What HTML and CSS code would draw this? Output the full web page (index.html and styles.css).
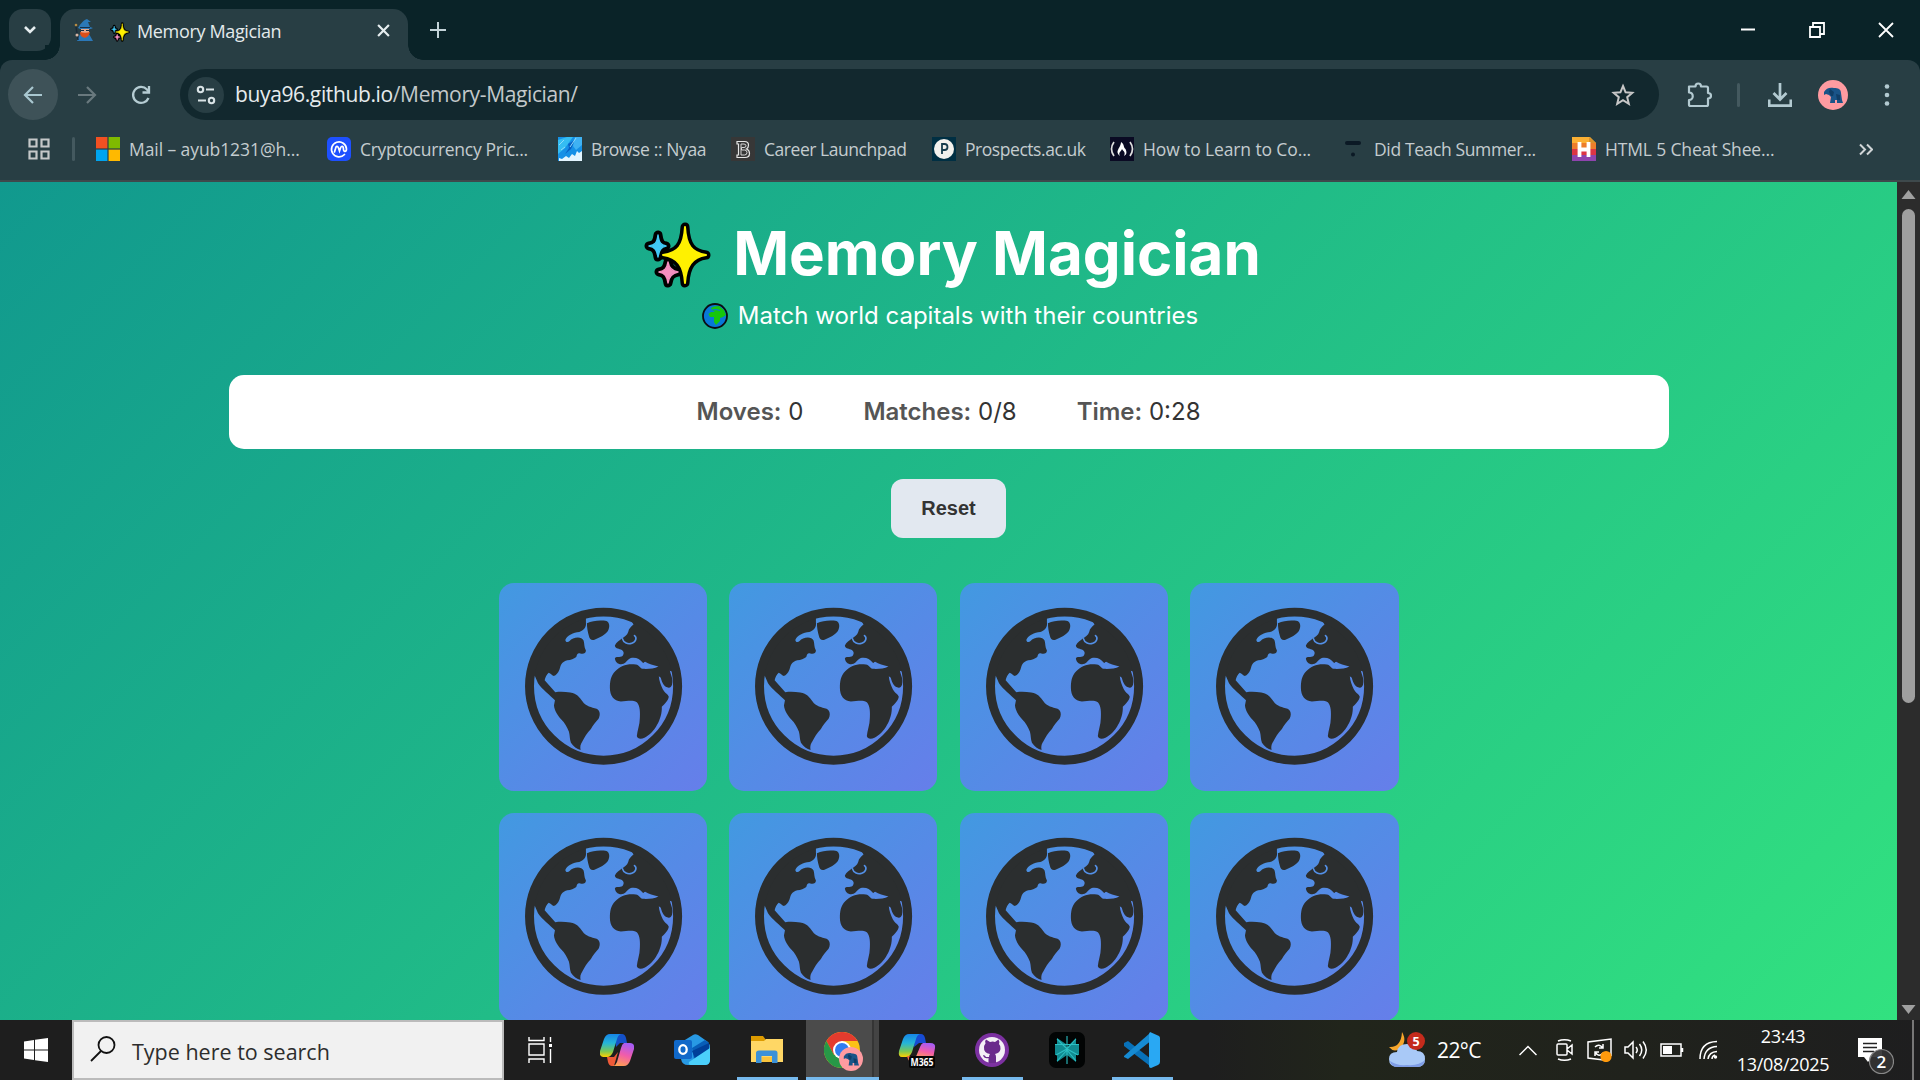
FILE: index.html
```html
<!DOCTYPE html>
<html lang="en">
<head>
<meta charset="utf-8">
<title>Memory Magician</title>
<link rel="stylesheet" href="styles.css">
</head>
<body>
<svg class="defs" aria-hidden="true">
  <symbol id="sparkles" viewBox="0 0 67 66">
    <g stroke="#000" stroke-width="9" stroke-linejoin="round">
      <path d="M41 5C42 24 48 31 62 33C48 35 42 44 41 61C40 44 34 35 19 33C34 31 40 24 41 5Z"/>
      <path d="M14 13C15 21 17 23 22 24C17 25 15 28 14 35C13 28 11 25 5 24C11 23 13 21 14 13Z"/>
      <path d="M24 40C25 46 28 49 34 50C28 51 25 54 24 61C23 54 21 51 15 50C21 49 23 46 24 40Z"/>
    </g>
    <path fill="#fff100" stroke="#fff100" stroke-width="2" stroke-linejoin="round" d="M41 5C42 24 48 31 62 33C48 35 42 44 41 61C40 44 34 35 19 33C34 31 40 24 41 5Z"/>
    <path fill="#41c8f5" stroke="#41c8f5" stroke-width="1.500" stroke-linejoin="round" d="M14 13C15 21 17 23 22 24C17 25 15 28 14 35C13 28 11 25 5 24C11 23 13 21 14 13Z"/>
    <path fill="#f48fc0" stroke="#f48fc0" stroke-width="1.500" stroke-linejoin="round" d="M24 40C25 46 28 49 34 50C28 51 25 54 24 61C23 54 21 51 15 50C21 49 23 46 24 40Z"/>
  </symbol>
  <symbol id="globe" viewBox="27 39 625 625">
    <g fill="#2b2e2f">
      <path d="M288 137V158C290 172 281 182 268 186C250 188 232 196 226 210C228 218 234 218 239 213C247 203 274 197 281 212C284 222 282 232 288 242C288 252 279 253 271 251C264 248 261 253 259 261C251 267 243 270 232 271C218 275 213 283 211 291C208 303 203 314 193 318C187 319 183 311 176 309C170 314 166 322 164 331L196 367C212 365 226 366 241 368C261 371 269 383 278 395C288 410 305 412 320 417C331 423 332 435 326 447C317 458 309 466 303 478C290 491 284 503 278 514C271 524 270 532 272 541C261 538 250 530 243 519C239 508 240 497 237 486C231 472 224 458 214 449C203 437 193 421 192 406L195 391C179 375 156 358 144 340L134 317L118 330L115 300C140 210 210 150 288 137Z"/>
      <path d="M291 160C308 152 330 150 350 153C360 158 360 172 354 183C347 194 330 203 312 210C304 212 299 207 297 198C293 186 291 172 291 160Z"/>
      <path d="M424 152L431 164C424 170 417 176 415 186C412 196 404 200 396 206C389 212 379 217 375 227C376 236 384 236 393 239C402 243 404 251 398 258C391 264 377 257 375 266C377 280 389 286 401 282C409 278 411 270 421 265C436 261 450 266 459 279C463 281 462 276 466 276C476 283 491 286 506 290C492 298 474 297 458 297C449 294 449 286 438 284C414 280 392 287 376 304C362 318 360 336 360 354C360 378 372 394 393 395C410 395 427 389 441 397C451 407 451 430 450 445C450 466 442 483 441 499C443 509 455 508 464 504C493 491 518 447 516 411C524 404 535 393 537 381C535 372 525 370 519 358C513 346 508 332 507 319L513 324C517 340 523 352 537 354C548 351 549 339 547 325L540 303L549 306L562 352L570 300C551 230 500 175 424 152Z"/>
    </g>
    <path fill="none" stroke="#5390e7" stroke-width="5" stroke-linecap="round" d="M398 207C401 219 414 224 426 220C440 215 441 202 434 197"/>
    <circle cx="419" cy="203" r="9" fill="#2b2e2f"/>
    <circle cx="341" cy="349" r="222.5" fill="none" stroke="#2b2e2f" stroke-width="27"/>
  </symbol>
  <symbol id="elephant" viewBox="0 0 30 30">
    <circle cx="15" cy="15" r="15" fill="#ff9ba1"/>
    <path fill="#1a5488" d="M6 12C8 8 12 7 16 8C20 8 23 9 23 13L24 20L25 23H19V20H17V23H12L13 17L11 15L8 14L6 15Z"/>
    <path fill="#103e68" d="M12 9L16 12L15 16L13 16L11 12ZM18 14L22 15L22 20H19Z"/>
  </symbol>
</svg>

<div class="screen">
  <header class="tabstrip">
    <button class="tab-search"><svg width="14" height="10" viewBox="0 0 14 10"><path d="M2 2L7 7L12 2" fill="none" stroke="#e6eef0" stroke-width="2.6"/></svg></button>
    <div class="tab">
      <svg class="wizard" viewBox="0 0 20 22"><path fill="#2b78b8" d="M4 9C6 6 8 2 13 0L17 3L14 3L16 8L19 9C15 11 8 11 4 9ZM3 22L6 15L10 18L15 15L19 22Z"/><path fill="#e9a88c" d="M7 10H15V14H7Z"/><path fill="#dc4f1b" d="M6 13C9 14 13 14 16 13C15 17 13 18 11 19C8 18 6 17 6 13Z"/><path fill="#172f48" d="M7 11H10V12H7ZM12 11H15V12H12ZM6 8H16V9H6Z"/><path stroke="#1a2a38" stroke-width="1.5" d="M2 8L4 21"/><circle cx="2" cy="6" r="1.3" fill="#b68b43"/><circle cx="3" cy="16" r="1.5" fill="#d8b7a5"/></svg>
      <svg class="tab-spark"><use href="#sparkles"/></svg>
      <span class="tab-title">Memory Magician</span>
      <svg class="tab-close" viewBox="0 0 12 12"><path d="M1 1L11 11M11 1L1 11" stroke="#e6eef0" stroke-width="2"/></svg>
    </div>
    <svg class="plus" viewBox="0 0 16 16"><path d="M8 0V16M0 8H16" stroke="#c3d3d8" stroke-width="2"/></svg>
    <div class="window-controls">
      <svg viewBox="0 0 16 16"><path d="M1 7.5H15" stroke="#fff" stroke-width="2"/></svg>
      <svg viewBox="0 0 16 16"><path d="M1 5H11V15H1ZM4 5V1H15V12H11" fill="none" stroke="#fff" stroke-width="1.8"/></svg>
      <svg viewBox="0 0 16 16"><path d="M1 1L15 15M15 1L1 15" stroke="#fff" stroke-width="1.8"/></svg>
    </div>
  </header>

  <nav class="toolbar">
    <span class="nav-btn active"><svg width="20" height="20" viewBox="0 0 20 20"><path d="M10 2L2 10L10 18M2 10H19" fill="none" stroke="#a9c7d0" stroke-width="2.2"/></svg></span>
    <span class="nav-btn"><svg width="20" height="20" viewBox="0 0 20 20"><path d="M10 2L18 10L10 18M18 10H1" fill="none" stroke="#69797e" stroke-width="2.2"/></svg></span>
    <span class="nav-btn"><svg width="22" height="22" viewBox="0 0 22 22"><path d="M18.500 14A8 8 0 1 1 17 5.500L19 8" fill="none" stroke="#b5ccd3" stroke-width="2.3"/><path d="M19 2V8.500H12.500" fill="none" stroke="#b5ccd3" stroke-width="2.3"/></svg></span>
    <div class="omnibox">
      <span class="site-info"><svg width="20" height="20" viewBox="0 0 20 20" fill="none" stroke="#d9e3e6" stroke-width="2.1"><circle cx="4.500" cy="4.500" r="2.700"/><path d="M10 4.500H18M2 15.500H10"/><circle cx="15.500" cy="15.500" r="2.700"/></svg></span>
      <span class="url"><b>buya96.github.io</b>/Memory-Magician/</span>
      <svg class="star" viewBox="0 0 24 24"><path d="M12 3L14.600 9.300L21.300 9.800L16.200 14.200L17.800 20.800L12 17.200L6.200 20.800L7.800 14.200L2.700 9.800L9.400 9.300Z" fill="none" stroke="#c7c7c7" stroke-width="2"/></svg>
    </div>
    <svg class="puzzle" viewBox="0 0 26 26"><path d="M3 4.500H9.500C9.500 .5 15 .5 15 4.500H20.500Q22 4.500 22 6V11C26 11 26 16.500 22 16.500V22.500Q22 24 20.500 24H4.500Q3 24 3 22.500V18C8 18 8 10.500 3 10.500Z" fill="none" stroke="#b3cad1" stroke-width="2.2" stroke-linejoin="round"/></svg>
    <i class="sep tool-sep"></i>
    <svg class="download" viewBox="0 0 24 24"><path d="M12 0V16M5.500 10L12 16.500L18.500 10M1.200 16.500V22.700H22.800V16.500" fill="none" stroke="#b3cad1" stroke-width="2.7"/></svg>
    <svg class="avatar"><use href="#elephant"/></svg>
    <svg class="dots" viewBox="0 0 6 24"><g fill="#b3cad1"><circle cx="3" cy="3.500" r="2.300"/><circle cx="3" cy="12" r="2.300"/><circle cx="3" cy="20.500" r="2.300"/></g></svg>
  </nav>

  <nav class="bookmarks">
    <svg class="apps" viewBox="0 0 22 22"><g fill="none" stroke="#c5c8c9" stroke-width="2.200"><path d="M1.500 1.500H8.500V8.500H1.500ZM13.500 1.500H20.500V8.500H13.500ZM1.500 13.500H8.500V20.500H1.500ZM13.500 13.500H20.500V20.500H13.500Z"/></g></svg>
    <i class="sep mark-sep"></i>
    <a class="mark m1"><svg viewBox="0 0 24 24"><path fill="#f25022" d="M0 0H11.400V11.400H0Z"/><path fill="#7fba00" d="M12.600 0H24V11.400H12.600Z"/><path fill="#00a4ef" d="M0 12.600H11.400V24H0Z"/><path fill="#ffb900" d="M12.600 12.600H24V24H12.600Z"/></svg><span>Mail – ayub1231@h...</span></a>
    <a class="mark m2"><svg viewBox="0 0 24 24"><rect width="24" height="24" rx="5" fill="#1e50ff"/><path d="M17.500 17.500A7.500 7.500 0 1 1 19.500 12C19.500 15 16.500 15 16.500 12.500C16.500 8.500 14.500 8.500 13.500 11L12.500 14L11.500 11C10.500 8.500 9 9 8.500 11.500L7.500 15" fill="none" stroke="#fff" stroke-width="1.700" stroke-linecap="round"/></svg><span>Cryptocurrency Pric...</span></a>
    <a class="mark m3"><svg viewBox="0 0 24 24"><path fill="#1590e6" d="M0 0H24V24H0Z"/><path fill="#35bdf2" d="M0 3L9 0H15L7 11L0 17Z"/><path fill="#0860c4" d="M10 7L17 3L13 12L7 17L11 11Z"/><path fill="#3fb2f3" d="M17 0H24V8L18 13L15 9Z"/><path fill="#e3f5ff" d="M24 14L21 16L19 14L17 19L14 17L11 21L8 19L4 22L1 21V24H24Z"/><path stroke="#8ddcfa" d="M18 1L12 10M3 13L7 10M1 8L6 3" fill="none"/></svg><span>Browse :: Nyaa</span></a>
    <a class="mark m4"><svg viewBox="0 0 24 24"><path fill="#373737" d="M0 0H24V24H0Z"/><path d="M6 4.500H13.500Q17.500 4.500 17.500 8Q17.500 11 15.500 12Q18.500 13 18.500 16.500Q18.500 20.500 14 20.500H6V18H7.500V7H6Z" fill="none" stroke="#e5e5e5" stroke-width="1.200"/><path d="M10 7V18H13.500Q16 18 16 15.500T13.500 13H10.500V10.500H13Q15 10.500 15 8.800T13 7Z" fill="none" stroke="#d5d5d5"/></svg><span>Career Launchpad</span></a>
    <a class="mark m5"><svg viewBox="0 0 24 24"><path fill="#002f43" d="M0 0H24V24H0Z"/><circle cx="12" cy="12" r="10" fill="#f3f1ed"/><path d="M10 17V7H12.500Q15.500 7 15.500 10T12.500 13H10" fill="none" stroke="#173c4d" stroke-width="1.800"/></svg><span>Prospects.ac.uk</span></a>
    <a class="mark m6"><svg viewBox="0 0 24 24"><path fill="#0a0a23" d="M0 0H24V24H0Z"/><path d="M4 5Q-1 12 4 19M20 5Q25 12 20 19" fill="none" stroke="#ddd" stroke-width="1.700"/><path d="M11 5C15 8 13 10 15.500 12C17.500 16 16 18 14 19C16 15 13 14 12 12C11 15 8 15 10 19C4 14 11 11 11 5Z" fill="#fff"/></svg><span>How to Learn to Co...</span></a>
    <a class="mark m7"><svg viewBox="0 0 24 24"><rect x="4" y="4" width="16" height="4" rx="2" fill="#0b1925"/><circle cx="12" cy="17.500" r="2" fill="#0b1925"/></svg><span>Did Teach Summer...</span></a>
    <a class="mark m8"><svg viewBox="0 0 24 24"><path fill="#fbb034" d="M0 0H18L24 6V8H0Z"/><path fill="#ed7d2b" d="M0 6H24V12H0Z"/><path fill="#dc3545" d="M0 12H24V18H0Z"/><path fill="#8e44ad" d="M0 18H24V24H0Z"/><path fill="#d8912c" d="M17 0V6H24Z"/><path d="M7.500 5V20M16.500 5V20M7.500 12.500H16.500" stroke="#fff" stroke-width="3.800"/></svg><span>HTML 5 Cheat Shee...</span></a>
    <svg class="more" viewBox="0 0 14 12"><path d="M1 1L6 6L1 11M8 1L13 6L8 11" fill="none" stroke="#d0d5d7" stroke-width="2"/></svg>
  </nav>

  <div class="viewport">
    <main class="game">
      <h1><svg class="title-spark"><use href="#sparkles"/></svg><span>Memory Magician</span></h1>
      <p class="subtitle"><svg class="earth" viewBox="0 0 26 26"><circle cx="13" cy="13" r="12" fill="#0878d7" stroke="#0b0d12" stroke-width="1.800"/><path fill="#16c60c" d="M9 5L12 3.500L17 3L22 7L24 12L21 14L18 15L18 18L14 22L12 19V14L8 14L6.500 11L9 9L13 9L10 7Z"/><path stroke="#0878d7" stroke-width="1.200" fill="none" d="M10 7L14 6.500L18 7.500"/></svg><span>Match world capitals with their countries</span></p>
      <section class="stats">
        <div><b>Moves:</b> 0</div><div><b>Matches:</b> 0/8</div><div><b>Time:</b> 0:28</div>
      </section>
      <button class="reset">Reset</button>
      <section class="board">
        <div class="card"><svg><use href="#globe"/></svg></div><div class="card"><svg><use href="#globe"/></svg></div><div class="card"><svg><use href="#globe"/></svg></div><div class="card"><svg><use href="#globe"/></svg></div>
        <div class="card"><svg><use href="#globe"/></svg></div><div class="card"><svg><use href="#globe"/></svg></div><div class="card"><svg><use href="#globe"/></svg></div><div class="card"><svg><use href="#globe"/></svg></div>
      </section>
    </main>
    <aside class="scrollbar">
      <svg viewBox="0 0 14 9"><path fill="#a0a0a0" d="M7 0L14 9H0Z"/></svg>
      <i class="thumb"></i>
      <svg viewBox="0 0 14 9"><path fill="#a0a0a0" d="M0 0H14L7 9Z"/></svg>
    </aside>
  </div>

  <footer class="taskbar">
    <span class="start"><svg width="24" height="24" viewBox="0 0 24 24"><path fill="#fff" d="M0 3.400L10 2V11.400H0ZM11 1.800L24 0V11.400H11ZM0 12.500H10V22L0 20.600ZM11 12.500H24V24L11 22.200Z"/></svg></span>
    <div class="search"><svg width="26" height="26" viewBox="0 0 26 26"><circle cx="16.500" cy="9" r="8" fill="none" stroke="#111" stroke-width="1.800"/><path d="M11 15L1 25" stroke="#111" stroke-width="1.800"/></svg><span>Type here to search</span></div>
    <span class="task view"><svg width="24" height="27" viewBox="0 0 24 27" fill="none" stroke="#fff" stroke-width="1.400"><path d="M1 0V3.500H16V0M1 7H16V18H1ZM1 26V22H16V26M22.500 0V5M22.500 12V26"/><path d="M22.500 7V10" stroke-width="3"/></svg></span>
    <span class="task"><svg width="34" height="32" viewBox="0 0 34 32"><defs><linearGradient id="cpA" x1="0" y1="0" x2="0" y2="1"><stop offset="0" stop-color="#1685e8"/><stop offset=".4" stop-color="#25b5d8"/><stop offset=".75" stop-color="#7ac755"/><stop offset="1" stop-color="#ffd000"/></linearGradient><linearGradient id="cpB" x1=".6" y1="0" x2=".3" y2="1"><stop offset="0" stop-color="#a65cf5"/><stop offset=".5" stop-color="#f15caa"/><stop offset="1" stop-color="#ffa052"/></linearGradient></defs><path fill="#1450c8" d="M15 0H22Q25 0 26 4L27 9H20L16 13Z"/><path fill="#ef5a38" d="M7 23H14L18 18L14 32H12Q9 32 8 28Z"/><path fill="url(#cpA)" d="M10 0H21Q18 1 17 5L13 18Q11 23 7 23H3Q-1 23 0 17L4 5Q6 0 10 0Z"/><path fill="url(#cpB)" d="M24 9H30Q35 9 34 15L30 27Q28 32 24 32H13Q16 31 17 28L21 14Q22 10 24 9Z"/></svg></span>
    <span class="task"><svg width="36" height="32" viewBox="0 0 36 32"><path fill="#2899e4" d="M6 9L19 1Q21-.500 24 1L34 8Q36 10 36 14V26Q36 30 31 31H14Q8 31 7 25Z"/><path fill="#085eb8" d="M18 14L31 6L35 9V16L20 25Z"/><path fill="#003f99" d="M18 17L35 9V15L21 24Z"/><path fill="#4bcffa" d="M15 28L36 14V26Q36 31 31 31H17Q14 31 15 28Z"/><rect y="6" width="18" height="19" rx="2" fill="#1068c9"/><ellipse cx="9" cy="15.500" rx="3.700" ry="4.400" fill="none" stroke="#fff" stroke-width="2.300"/></svg></span>
    <span class="task open"><svg width="34" height="28" viewBox="0 0 34 28"><path fill="#dd9b00" d="M1 0H13L16 4V8H1Z"/><path fill="#ffd765" d="M1 5L14 5L16 3H33V26H1Z"/><path fill="#3b91d8" d="M6 27V17Q6 14.500 9 14.500H25Q27.500 14.500 27.500 17V27H22V20H11.500V27Z"/><path fill="#f9c33c" d="M12 21H22V26H12Z"/></svg></span>
    <span class="task open current"><svg width="40" height="40" viewBox="0 0 40 40"><circle cx="18" cy="18" r="18" fill="#fbc117"/><path fill="#e33b2e" d="M2.400 9A18 18 0 0 1 33.600 9H18L10 23Z"/><path fill="#279847" d="M2.400 9A18 18 0 0 0 18 36L26 23H10Z"/><circle cx="18" cy="18" r="9" fill="#fff"/><circle cx="18" cy="18" r="7" fill="#307df0"/><svg x="15" y="15" width="24" height="24"><use href="#elephant"/></svg></svg></span>
    <span class="task"><svg class="copilot-365" width="37" height="36" viewBox="0 0 37 36"><path fill="#174bd3" d="M16 2H22Q25 2 26 6L27 11H20L15 15Z"/><path fill="url(#cpA)" d="M10 2H21Q18 3 17 7L13 20Q11 25 7 25H3Q-1 25 0 19L4 7Q6 2 10 2Z"/><path fill="#ed663f" d="M8 24H15L12 30Q9 29 8 24Z"/><path fill="url(#cpB)" d="M24 11H31Q37 11 36 16L34 27H16L21 15Q22 12 24 11Z"/><rect x="10" y="24" width="26" height="12" rx="2" fill="#050505"/><text class="m365" x="11.500" y="33.500" textLength="23" lengthAdjust="spacingAndGlyphs">M365</text></svg></span>
    <span class="task open"><svg width="34" height="34" viewBox="0 0 34 34"><circle cx="17" cy="17" r="17" fill="#7c31a1"/><circle cx="17" cy="17" r="13" fill="#f4f0f6"/><path fill="#6a2b8c" d="M13.500 30V25Q9 26 8 22Q10 22 11 24H14Q14 22 15 21Q8.500 20 9 14Q9 12 10.500 10.500Q9.500 8 11 6.500L15 9Q18 8 20 9L23.500 6.500Q25 9 24 11Q26 13 25.500 16Q25 20 20 21Q21 22 21 24V30Z"/></svg></span>
    <span class="task"><svg width="36" height="36" viewBox="0 0 36 36"><rect width="36" height="36" rx="7" fill="#020404"/><path fill="#118b91" d="M8 6L17 12V16L27 6V12H30V23H27V30L18 23L8 30V23H6V12H8Z"/><path d="M18 4V32M8 7L18 17L27 7M6 12.500H30M8 29L18 18L27 29M7 23L18 17L29 23" fill="none" stroke="#2cbfc3" stroke-width="1.100"/></svg></span>
    <span class="task open"><svg width="36" height="36" viewBox="0 0 36 36"><path fill="#0871b9" d="M0 11L4 9L27 27V35L26 34L0 14Z"/><path fill="#168bd3" d="M0 24L26 1L28 8L4 27L0 25Z"/><path fill="#29a8f3" d="M26 0L35 4Q36 5 36 6V30Q36 32 34 33L27 36Q25 36 25 34V2Z"/></svg></span>
    <div class="weather"><svg width="37" height="36" viewBox="0 0 37 36"><path fill="#f6a62b" d="M13 0Q19 10 10 17Q5 21 0 15Q12 16 13 0Z"/><path fill="#a9c9f7" d="M9 35Q0 35 0 27Q0 20 8 20Q9 12 18 12Q26 12 28 19Q36 19 36 27Q36 35 28 35Z"/><path fill="#7f9de6" d="M1 29Q8 34 18 33Q30 34 36 28Q35 35 28 35H9Q2 35 1 29Z"/><circle cx="27" cy="9" r="9" fill="#c42b1c"/><text class="badge5" x="23.500" y="13.500">5</text></svg><span>22°C</span></div>
    <div class="tray">
      <svg class="chevron" width="18" height="11" viewBox="0 0 18 11"><path d="M.500 10L9 1.500L17.500 10"/></svg>
      <svg class="meet" width="17" height="22" viewBox="0 0 17 22"><path d="M2 2Q8.500-.500 15 2M2 20Q8.500 22.500 15 20M2 5H10Q11 5 11 6V15Q11 16 10 16H2Q1 16 1 15V6Q1 5 2 5ZM11 10L16 6V15L11 11"/></svg>
      <svg class="update" width="26" height="24" viewBox="0 0 26 24"><path d="M17 22L1 20V4L24 1V18M8 9Q12 5 16 10M16 6V10H12M8 18V14H12M8 14Q12 20 16 15"/><circle cx="19" cy="18.500" r="5.600" fill="#ff9a0c" stroke="none"/></svg>
      <svg class="volume" width="24" height="20" viewBox="0 0 24 20"><path d="M1 7H4L9 2V18L4 13H1ZM12 7Q14.500 10 12 13M15.500 4Q20 10 15.500 16M19 1.500Q25.500 10 19 18.500"/></svg>
      <svg class="battery" width="24" height="14" viewBox="0 0 24 14"><path d="M1 1H21V13H1ZM22.500 5V9"/><path fill="#fff" stroke="none" d="M3 3H12V11H3Z"/></svg>
      <svg width="19" height="20" viewBox="0 0 19 20"><path d="M1 19Q1 2 18 1.500M5 19Q6 7 18 6.500M9 19Q10 12 18 11.500"/><path d="M13 19Q13 16 16 15"/><circle cx="16.500" cy="17" r="1.700" fill="#fff" stroke="none"/></svg>
    </div>
    <div class="clock"><span>23:43</span><span>13/08/2025</span></div>
    <svg class="notice" viewBox="0 0 36 38"><path fill="#fff" d="M0 0H24V19H14L10 24L6 19H0Z"/><path stroke="#222" stroke-width="1.500" d="M5 5.500H19M5 9.500H19M5 13.500H16"/><circle cx="23.500" cy="23.500" r="12" fill="#333" fill-opacity=".93" stroke="#888" stroke-width="1.200"/><text class="badge2" x="18.500" y="29.500">2</text></svg>
    <i class="desktop-edge"></i>
  </footer>
</div>
</body>
</html>
```
FILE: styles.css
```css
* { box-sizing: border-box; }
body { margin: 0; overflow: hidden; font-family: "Open Sans", "Noto Sans", sans-serif; }
svg { display: block; flex: none; }
.defs { position: absolute; width: 0; height: 0; }
.screen { width: 1920px; height: 1080px; display: flex; flex-direction: column; background: #0a2328; }

.tabstrip { height: 60px; flex: none; display: flex; align-items: flex-start; padding-top: 9px; }
.tab-search { width: 42px; height: 42px; margin-left: 9px; padding: 0; border: 0; border-radius: 14px; background: #283e44; display: grid; place-items: center; }
.tab { position: relative; width: 348px; height: 51px; margin-left: 9px; padding: 0 18px 9px 14px; border-radius: 15px 15px 0 0; background: #283e44; display: flex; align-items: center; }
.tab::before, .tab::after { content: ""; position: absolute; bottom: 0; width: 15px; height: 15px; }
.tab::before { left: -15px; background: radial-gradient(circle at 0 0, #0a2328 14.5px, #283e44 15px); }
.tab::after { right: -15px; background: radial-gradient(circle at 100% 0, #0a2328 14.5px, #283e44 15px); }
.wizard { width: 20px; height: 22px; }
.tab-spark { width: 20px; height: 20px; margin: 3px 7px 0 16px; }
.tab-title { flex: 1; color: #e3eaec; font-size: 18px; letter-spacing: -.35px; white-space: nowrap; padding: 1px 0 0; }
.tab-close { width: 13px; height: 13px; }
.plus { width: 16px; height: 16px; margin: 13px 0 0 22px; }
.window-controls { display: flex; gap: 53px; margin: 13px 26px 0 auto; }
.window-controls svg { width: 16px; height: 16px; }

.toolbar { height: 60px; flex: none; display: flex; align-items: center; padding: 9px 0 0 8px; background: #283e44; border-radius: 12px 12px 0 0; }
.nav-btn { width: 50px; height: 51px; margin-right: 4px; display: grid; place-items: center; border-radius: 50%; }
.nav-btn.active { background: #3e5258; }
.omnibox { width: 1479px; height: 51px; margin-left: 10px; padding: 0 24px 0 8px; border-radius: 26px; background: #12282e; display: flex; align-items: center; }
.site-info { width: 36px; height: 36px; border-radius: 50%; background: #283e44; display: grid; place-items: center; }
.url { flex: 1; margin: -1px 0 0 11px; color: #c3c8ca; font-size: 21px; letter-spacing: -.37px; }
.url b { color: #e6ebed; font-weight: 400; }
.star { width: 24px; height: 24px; }
.puzzle { width: 26px; height: 26px; margin-left: 27px; }
.sep { width: 3px; height: 24px; border-radius: 2px; background: #44595f; }
.tool-sep { margin-left: 25px; }
.download { width: 24px; height: 24px; margin-left: 28px; }
.avatar { width: 30px; height: 30px; margin-left: 26px; }
.dots { width: 6px; height: 24px; margin-left: 36px; }

.bookmarks { height: 62px; flex: none; display: flex; align-items: center; padding: 0 0 2px 28px; background: #283e44; border-bottom: 2px solid #3e494c; }
.apps { width: 22px; height: 22px; }
.mark-sep { margin: 0 21px 0 22px; }
.mark { display: flex; align-items: center; gap: 9px; color: #c4cccf; font-size: 17.5px; letter-spacing: -.3px; white-space: nowrap; }
.mark svg { width: 24px; height: 24px; }
.m1, .m2 { width: 231px; }
.m1 { letter-spacing: -.08px; }
.m3 { width: 173px; letter-spacing: -.37px; }
.m4 { width: 201px; letter-spacing: -.45px; }
.m5 { width: 178px; letter-spacing: -.45px; }
.m6, .m7 { width: 231px; }
.m6 { letter-spacing: -.12px; }
.m7 { letter-spacing: -.37px; }
.m8 { width: 287px; letter-spacing: -.15px; }
.more { width: 14px; height: 13px; }

.viewport { height: 838px; flex: none; display: flex; }
.game { width: 1897px; overflow: hidden; padding-top: 35px; display: flex; flex-direction: column; align-items: center; font-family: Inter, sans-serif; background: linear-gradient(135deg, #11998e 0%, #38ef7d 100%) 0 0 / 1897px 1350px; }
h1 { display: flex; align-items: center; gap: 22px; height: 72px; margin: 0; padding-left: 8px; color: #fff; font-size: 60px; font-weight: 700; line-height: 72px; white-space: nowrap; }
.title-spark { width: 67px; height: 66px; margin-top: 4px; }
.subtitle { display: flex; align-items: center; gap: 10px; height: 29px; margin: 12px 0 0; padding-left: 3px; color: #fff; font-size: 24px; line-height: 29px; white-space: nowrap; }
.earth { width: 26px; height: 26px; }
.stats { width: 1440px; height: 74px; flex: none; margin-top: 45px; padding-bottom: 2px; border-radius: 15px; background: #fff; display: flex; justify-content: center; align-items: center; gap: 60px; color: #333; font-size: 24px; }
.stats b { color: #555; font-weight: 600; }
.reset { width: 115px; height: 59px; flex: none; margin-top: 30px; border: 0; border-radius: 12px; background: #e2e8f0; color: #333; font: 700 20px "Liberation Sans", sans-serif; }
.board { width: 900px; flex: none; margin-top: 45px; display: grid; grid-template-columns: repeat(4, 1fr); column-gap: 22.5px; row-gap: 22px; }
.card { height: 208px; border-radius: 15px; background: linear-gradient(135deg, #4299e1, #667eea); }
.card svg { width: 100%; height: 100%; }
.scrollbar { width: 23px; padding: 8px 0 6px; background: #2c2c2c; display: flex; flex-direction: column; align-items: center; }
.scrollbar svg { width: 15px; height: 9px; }
.thumb { width: 13px; height: 494px; margin: 10px 0 auto; border-radius: 7px; background: #9f9f9f; }

.taskbar { height: 60px; flex: none; display: flex; align-items: center; background: linear-gradient(90deg, #1e1e1e 0 63%, #21251b 70%, #20221c 85%, #1e1e1f); color: #fff; }
.start { width: 72px; display: grid; place-items: center; }
.search { width: 432px; height: 60px; padding-left: 16px; border: 2px solid #bbb; background: #f1f1f1; display: flex; align-items: center; gap: 16px; color: #2d2d2d; font-size: 21.5px; letter-spacing: 0; }
.search svg { margin-bottom: 2px; }
.search span { padding-top: 2px; }
.task { position: relative; width: 75px; height: 60px; display: grid; place-items: center; }
.task.view { padding-right: 3px; }
.task.open::after { content: ""; position: absolute; left: 8px; bottom: 0; width: 61px; height: 3px; background: #76b9ed; }
.task.current { padding: 4px 0 0 5px; background: linear-gradient(90deg, transparent 2px, #4b4b4b 2px 68px, #353535 68px 70px, #444 70px); }
.task.current::after { left: 2px; width: 73px; }
.copilot-365 { overflow: visible; margin-left: 1px; }
.m365 { fill: #fff; font: 700 10px "Open Sans", sans-serif; }
.weather { width: 91px; margin-left: 210px; display: flex; align-items: center; gap: 11px; font-size: 21px; letter-spacing: -.6px; }
.badge5 { fill: #fff; font: 700 12.5px "Open Sans", sans-serif; }
.tray { width: 200px; margin-left: 39px; display: flex; align-items: center; }
.tray svg { fill: none; stroke: #fff; stroke-width: 1.500; }
.chevron { margin-right: 19px; }
.meet { margin-right: 14px; }
.update { margin-right: 11px; }
.volume { margin-right: 12px; }
.battery { margin-right: 15px; }
.clock { width: 100px; margin-left: 14px; display: flex; flex-direction: column; align-items: center; font-size: 18px; line-height: 28px; letter-spacing: -.3px; }
.notice { width: 36px; height: 38px; margin: 14px 0 0 25px; }
.badge2 { fill: #fff; font: 600 17px "Open Sans", sans-serif; }
.desktop-edge { width: 2px; height: 60px; margin-left: 18px; background: #777; }
```
